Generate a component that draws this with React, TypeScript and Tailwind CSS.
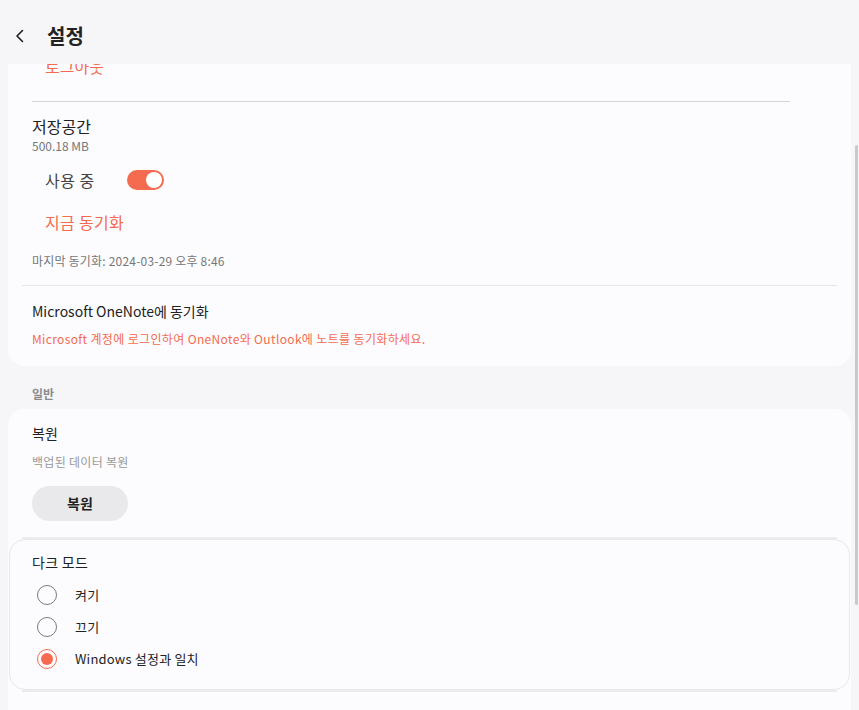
import React from "react";

const font = { fontFamily: '"Noto Sans CJK KR", "Noto Sans", sans-serif' };

function Radio({ checked }: { checked?: boolean }) {
  return checked ? (
    <span className="flex h-5 w-5 items-center justify-center rounded-full border-[1.5px] border-[#f46b50]">
      <span className="h-[12px] w-[12px] rounded-full bg-[#f46b50]" />
    </span>
  ) : (
    <span className="h-5 w-5 rounded-full border-[1.5px] border-[#7a7a7a]" />
  );
}

export default function App() {
  return (
    <div className="relative h-[710px] w-[859px] overflow-hidden bg-[#f6f6f8]" style={font}>
      {/* header */}
      <div className="flex h-16 items-center bg-[#f6f6f8]">
        <svg className="ml-[12px] mt-[8px]" width="16" height="16" viewBox="0 0 16 16" fill="none">
          <path d="M10.5 2.5 L5 8 L10.5 13.5" stroke="#1f1f1f" strokeWidth="1.6" strokeLinecap="round" strokeLinejoin="round" />
        </svg>
        <span className="ml-[19px] mt-[8px] text-[20px] font-bold leading-7 text-[#222]">설정</span>
      </div>

      {/* scrolled content */}
      <div className="h-[646px] overflow-hidden">
        <div className="-mt-[26px] px-2">
          {/* card 1 */}
          <div className="rounded-2xl bg-[#fcfcfe] px-6 pt-4 pb-[19px]">
            <div className="pl-[13px] text-[16px] leading-6 text-[#f46b50]">로그아웃</div>
            <div className="mt-[23px] h-px w-[758px] bg-[#d4d4d6]" />
            <div className="mt-3 text-[16px] leading-6 text-[#222]">저장공간</div>
            <div className="text-[12px] leading-4 text-[#777]">500.18 MB</div>
            <div className="mt-[14px] flex h-6 items-center pl-[13px]">
              <span className="text-[16px] leading-6 tracking-[0.5px] text-[#444]">사용 중</span>
              <span className="ml-[32px] flex h-5 w-[37px] items-center justify-end rounded-full bg-[#f46b50] pr-[2px]">
                <span className="h-4 w-4 rounded-full bg-white" />
              </span>
            </div>
            <div className="mt-[18px] pl-[13px] text-[16px] leading-6 tracking-[0.3px] text-[#f46b50]">지금 동기화</div>
            <div className="mt-[19px] text-[12px] leading-4 tracking-[0.2px] text-[#777]">마지막 동기화: 2024-03-29 오후 8:46</div>
            <div className="-mx-[10px] mt-4 h-px bg-[#e6e6e8]" />
            <div className="mt-[15px] text-[14px] leading-5 text-[#222]">Microsoft OneNote에 동기화</div>
            <div className="mt-[10px] text-[12px] leading-4 tracking-[0.35px] text-[#f46b50]">
              Microsoft 계정에 로그인하여 OneNote와 Outlook에 노트를 동기화하세요.
            </div>
          </div>

          <div className="mt-5 pl-6 text-[12px] font-semibold leading-4 text-[#8a8a8e]">일반</div>

          {/* card 2 */}
          <div className="mt-[7px] rounded-t-2xl bg-[#fcfcfe] pt-[14px] pb-10">
            <div className="px-6">
              <div className="text-[14px] leading-5 text-[#222]">복원</div>
              <div className="mt-[11px] text-[12px] leading-4 tracking-[0.3px] text-[#999]">백업된 데이터 복원</div>
              <button className="mt-4 flex h-[35px] w-24 items-center justify-center rounded-full bg-[#e9e9ec] text-[14px] font-bold text-[#222]">
                복원
              </button>
            </div>
            <div className="mx-[14px] mt-[16px] h-[2px] bg-[#ececee]" />
            <div className="mx-px rounded-2xl border border-[#e8e8ea] bg-[#fcfcfe] pt-[12px] pb-[14px]">
              <div className="pl-[22px] text-[14px] leading-5 tracking-[0.3px] text-[#222]">다크 모드</div>
              <div className="mt-[7px] flex flex-col">
                {[
                  { label: "켜기", checked: false },
                  { label: "끄기", checked: false },
                  { label: "Windows 설정과 일치", checked: true },
                ].map((o) => (
                  <div key={o.label} className="flex h-8 items-center pl-[27px]">
                    <Radio checked={o.checked} />
                    <span className="ml-[18px] text-[13px] leading-5 tracking-[0.2px] text-[#222]">{o.label}</span>
                  </div>
                ))}
              </div>
            </div>
            <div className="mx-[14px] h-[2px] bg-[#ececee]" />
          </div>
        </div>
      </div>

      {/* scrollbar */}
      <div className="absolute left-[855px] top-[145px] h-[460px] w-[3px] rounded-full bg-[#c9c9cb]" />
    </div>
  );
}
